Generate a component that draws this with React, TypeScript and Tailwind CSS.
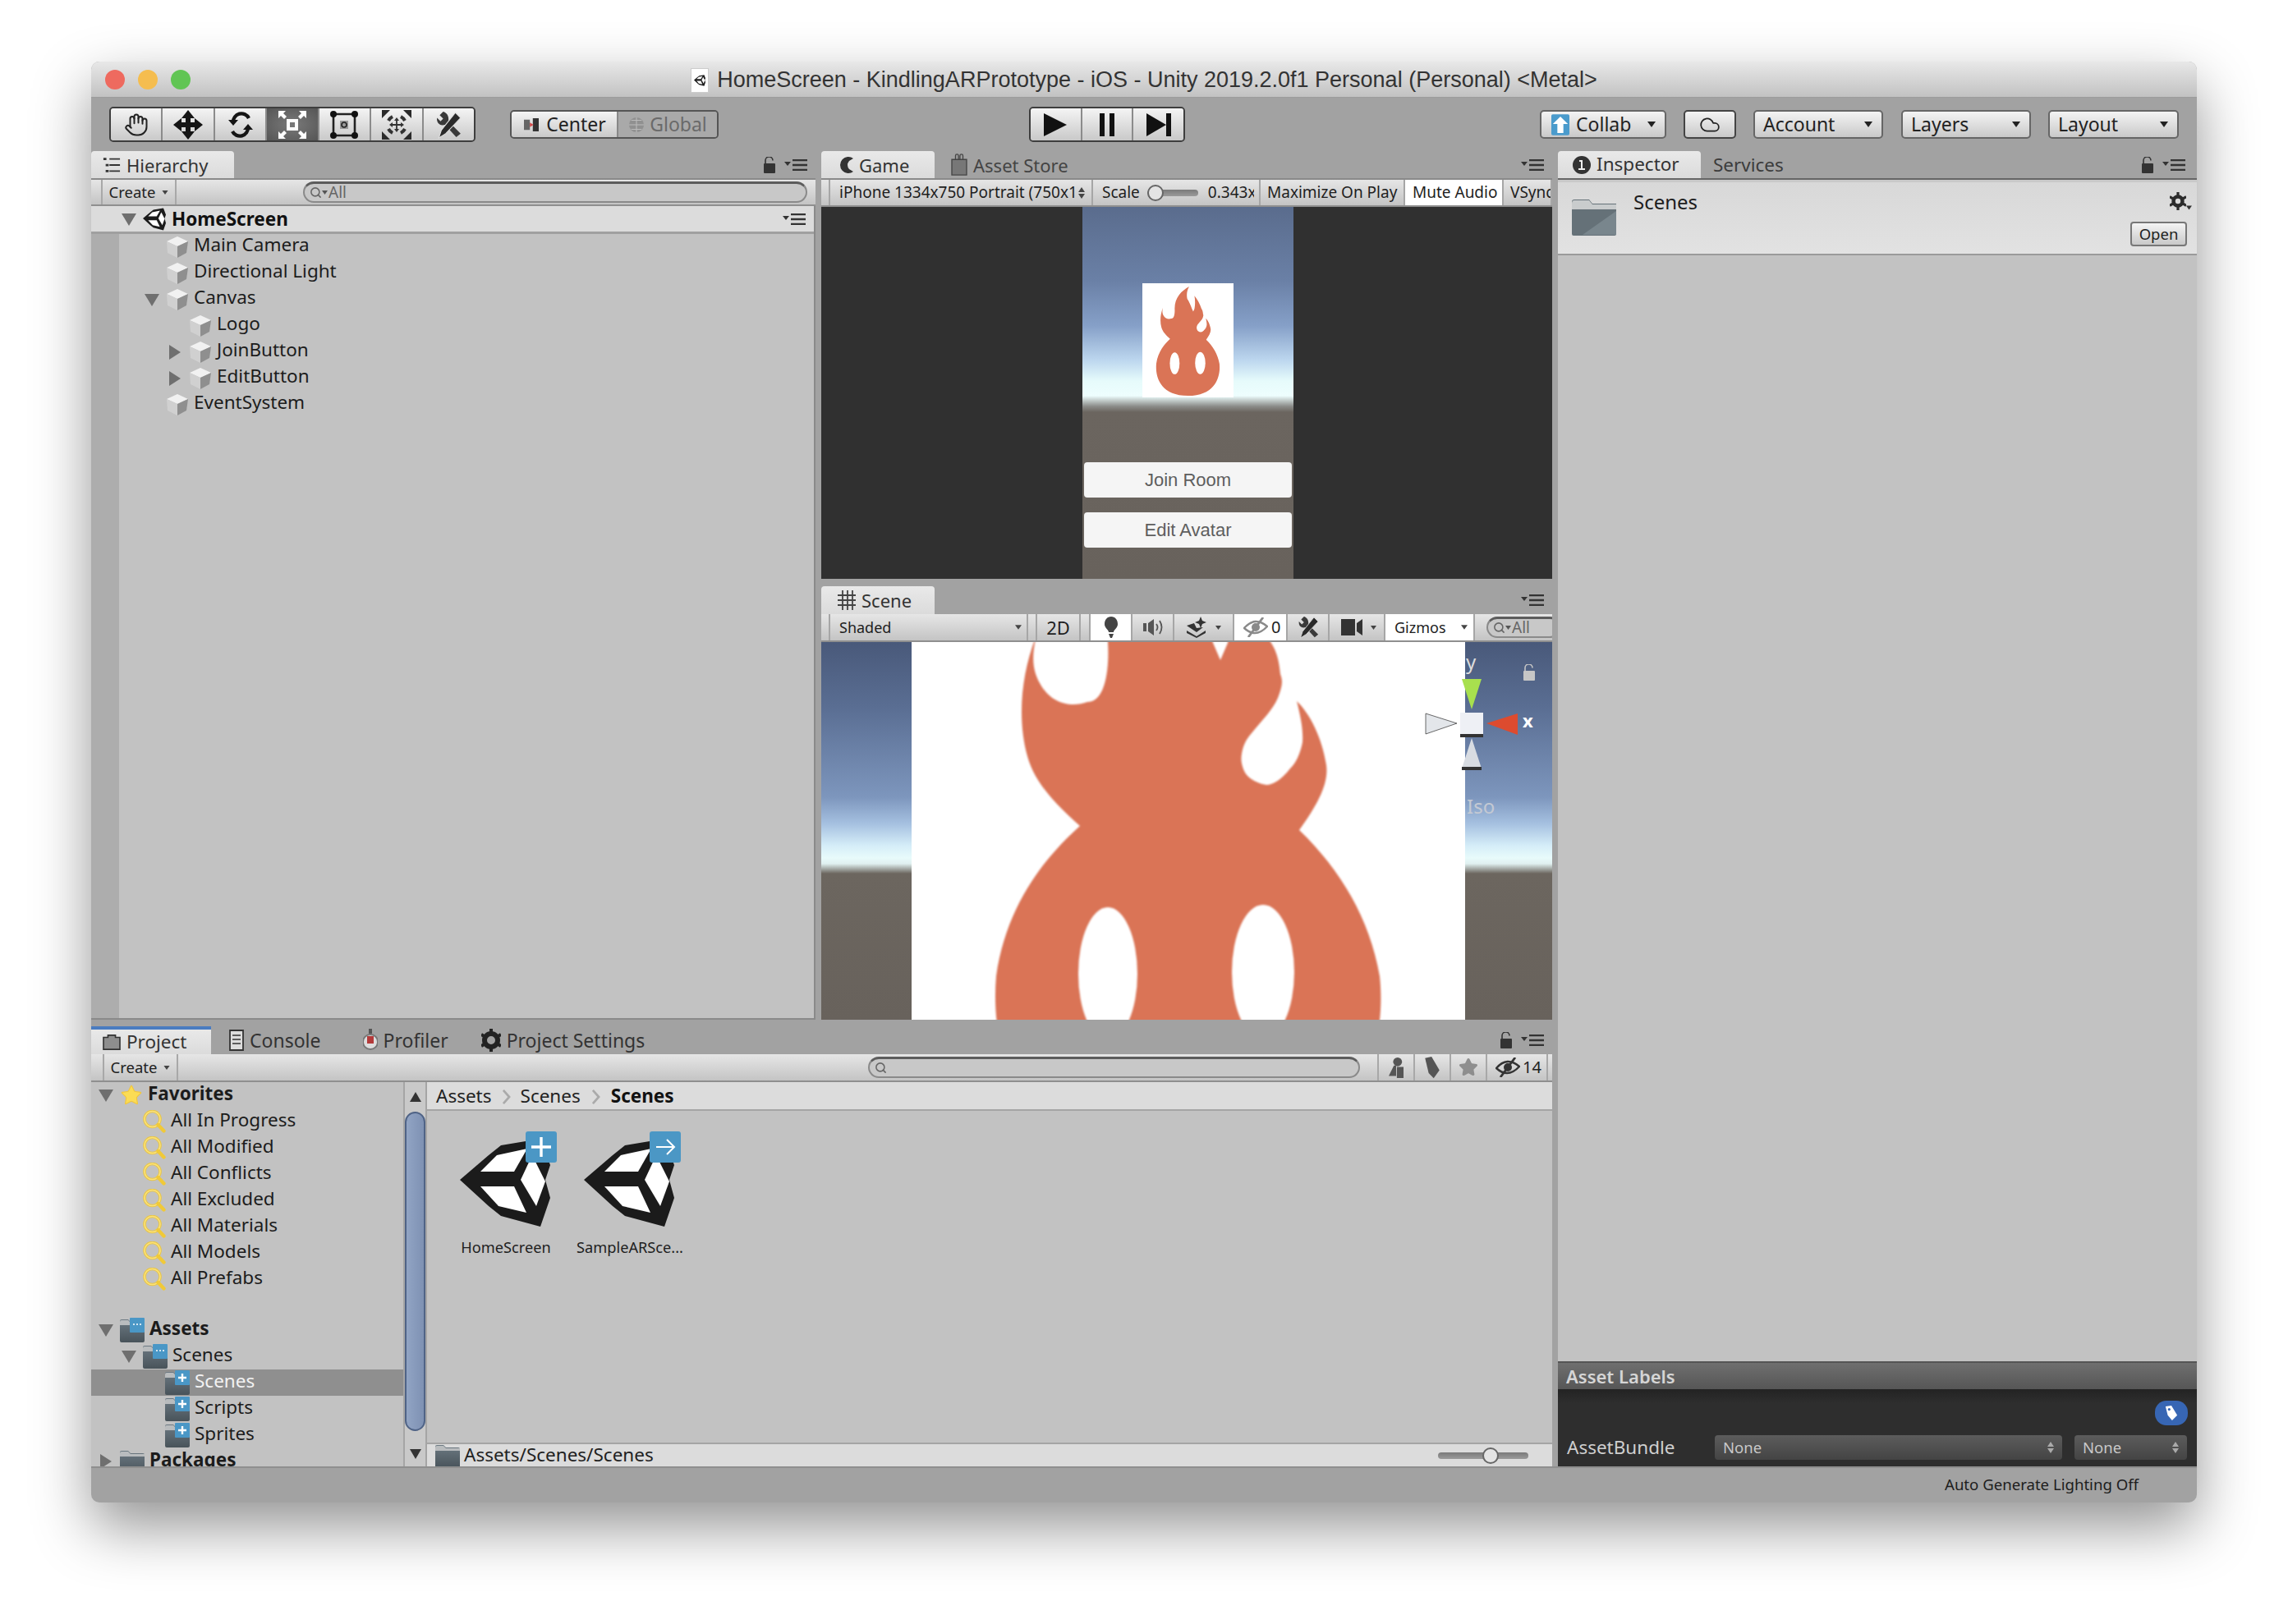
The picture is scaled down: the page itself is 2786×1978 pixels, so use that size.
import { Cloud, Hand, Search, Star } from 'lucide-react';
import { ReactNode } from 'react';

const btnGrad = 'bg-[linear-gradient(#f4f4f4,#c9c9c9)]';
const barGrad = 'bg-[linear-gradient(#e6e6e6,#c4c4c4)]';

const Caret = ({ className = 'w-[10px] h-[7px] text-[#222]' }: { className?: string }) => (
  <svg viewBox="0 0 10 7" className={className}>
    <path d="M0 0H10L5 7Z" fill="currentColor" />
  </svg>
);

const TreeArrow = ({ open }: { open: boolean }) => (
  <svg viewBox="0 0 18 18" className="w-[18px] h-[18px] text-[#6f6f6f]">
    <path d={open ? 'M0 2H18L9 17Z' : 'M2 0L16 9L2 18Z'} fill="currentColor" />
  </svg>
);

const PaneMenu = () => (
  <svg viewBox="0 0 28 14" className="w-[28px] h-[14px]">
    <path d="M0 3H8L4 8Z" fill="#333" />
    <path d="M10 1H28M10 7H28M10 13H28" stroke="#333" strokeWidth="2.4" />
  </svg>
);

const Lock = ({ color = '#333' }: { color?: string }) => (
  <svg viewBox="0 0 16 20" className="w-[16px] h-[20px]">
    <path d="M3 8V4.5a4.5 4.5 0 0 1 9 0" fill="none" stroke={color} strokeWidth="1.6" />
    <rect x="1" y="8" width="14" height="12" rx="1" fill={color} />
  </svg>
);

const Cube = () => (
  <svg viewBox="0 0 28 28" className="w-[28px] h-[28px] shrink-0">
    <path d="M14 1L27 7L14 13L1 7Z" fill="#f1f1f1" />
    <path d="M1 7L14 13V27L2 21Z" fill="#d0d0d0" />
    <path d="M27 7L14 13V27L25 21Z" fill="#8f8f8f" />
  </svg>
);

const UnityMark = ({ className }: { className: string }) => (
  <svg viewBox="0 0 110 107" className={className}>
    <path d="M0 50L35 20L50 8L98 0L110 32L104 50L110 72L98 107L50 94L35 82Z" fill="#1b1b1b" />
    <path d="M25 40L45 20L82 12L66 40Z" fill="#fff" />
    <path d="M74 50L88 20L104 52L93 82Z" fill="#fff" />
    <path d="M25 58H66L81 90L47 82Z" fill="#fff" />
  </svg>
);

const Folder = ({ badge }: { badge?: 'dots' | 'plus' }) => (
  <svg viewBox="0 0 30 30" className="w-[30px] h-[30px] shrink-0">
    <defs>
      <linearGradient id="fold" x1="0" y1="0" x2="0" y2="1">
        <stop offset="0" stopColor="#6d7a83" />
        <stop offset="1" stopColor="#48535a" />
      </linearGradient>
    </defs>
    <path d="M0 4Q0 2 2 2H10L13 5H28Q30 5 30 7V28Q30 30 28 30H2Q0 30 0 28Z" fill="url(#fold)" />
    <path d="M0 5Q0 3 2 3H10L13 6H30V9H0Z" fill="#b9bcbe" />
    {badge && <rect x="12" y="0" width="18" height="18" rx="1" fill="#4a97c6" />}
    {badge === 'dots' && <path d="M16 8h2M20 8h2M24 8h2" stroke="#fff" strokeWidth="1.6" />}
    {badge === 'plus' && <path d="M21 4V14M16 9H26" stroke="#fff" strokeWidth="2.4" />}
  </svg>
);

const Magnifier = () => (
  <svg viewBox="0 0 28 28" className="w-[28px] h-[28px] shrink-0">
    <circle cx="11.5" cy="11" r="9.5" fill="none" stroke="#e8c648" strokeWidth="3.6" />
    <circle cx="11.5" cy="11" r="9.5" fill="none" stroke="#fbe27a" strokeWidth="1.6" />
    <path d="M18.5 18L25.5 25.5" stroke="#f0c938" strokeWidth="4.4" strokeLinecap="round" />
  </svg>
);

const Tools = ({ className = 'w-[30px] h-[32px]' }: { className?: string }) => (
  <svg viewBox="0 0 30 32" className={className}>
    <path d="M9 1L5 5L9 9L6 12L2 8C1 13 5 18 11 16L24 30L29 26L15 12C16 6 13 2 9 1Z" fill="#3a3a3a" />
    <path d="M23 2L29 8L12 26L4 31L7 22Z" fill="#2a2a2a" stroke="#e0e0e0" strokeWidth="1" />
  </svg>
);

const EyeSlash = ({ color = '#8a8a8a' }: { color?: string }) => (
  <svg viewBox="0 0 30 24" className="w-[30px] h-[24px]">
    <path d="M1 13Q14 -2 29 11Q15 26 1 13Z" fill="none" stroke={color} strokeWidth="2.4" />
    <circle cx="15" cy="12" r="5" fill={color} />
    <path d="M6 24L24 0" stroke={color} strokeWidth="2.8" />
  </svg>
);

const Flame = ({ className }: { className: string }) => (
  <svg viewBox="0 0 674 844" preserveAspectRatio="none" className={className}>
    <rect width="674" height="844" fill="#fff" />
    <g className="blur-[1.2px]">
      <path
        d="M346 24C290 55 238 105 239 189C241 220 236 262 214 261C195 268 170 264 156 238C147 222 146 205 152 180C134 225 128 280 141 327C150 360 175 385 205 412C165 448 116 505 103 595C95 690 130 832 338 832C540 832 580 690 570 595C558 525 522 465 472 417C495 385 508 360 505 338C500 305 485 275 469 260C474 280 477 295 476 310C473 325 468 335 461 342C450 356 440 362 432 362C418 360 408 352 405 345C401 335 401 330 402 324C404 312 408 306 414 299C428 282 440 270 446 256C452 240 452 235 449 227C447 205 442 195 437 188C425 150 405 115 385 92C392 125 390 165 385 189L376 210L367 189C356 160 345 135 332 115C325 85 330 50 346 24Z"
        fill="#da7456"
      />
      <ellipse cx="239" cy="592" rx="36" ry="81" fill="#fff" />
      <ellipse cx="428" cy="590" rx="38" ry="82" fill="#fff" />
    </g>
  </svg>
);

const SearchField = ({ className, label }: { className: string; label?: string }) => (
  <div className={`flex items-center rounded-full border-2 border-[#8a8a8a] border-t-[3px] border-t-[#5c5c5c] bg-[#c8c8c8] pl-[6px] h-[26px] ${className}`}>
    <Search className="w-[15px] h-[15px] text-[#666]" strokeWidth={2.5} />
    {label && (
      <>
        <Caret className="w-[7px] h-[5px] text-[#555]" />
        <span className="text-[19px] leading-none text-[#666] ml-[1px]">{label}</span>
      </>
    )}
  </div>
);

const Tab = ({ active, icon, label, className = '', size = 'text-[22px]' }: { active?: boolean; icon: ReactNode; label: string; className?: string; size?: string }) => (
  <div
    className={`flex items-center gap-[7px] h-full text-[#333] ${size} ${
      active ? 'bg-[linear-gradient(#e9e9e9,#dbdbdb)] rounded-t-[4px]' : ''
    } ${className}`}>
    {icon}
    <span className="leading-none">{label}</span>
  </div>
);

const ListIcon = () => (
  <svg viewBox="0 0 24 24" className="w-[22px] h-[24px]">
    <path d="M1 4H5M4 12H8M4 20H8" stroke="#333" strokeWidth="3" />
    <path d="M9 4H23M9 12H23M9 20H23" stroke="#333" strokeWidth="2" />
  </svg>
);

const ToolSeg = ({ active, children }: { active?: boolean; children: ReactNode }) => (
  <div
    className={`flex-1 flex items-center justify-center border-r-2 last:border-r-0 border-[#8b8b8b] ${
      active ? 'bg-[radial-gradient(#7a7a7a,#555)]' : btnGrad
    }`}>
    {children}
  </div>
);

const Dropdown = ({ label, className }: { label: string; className: string }) => (
  <div className={`flex items-center justify-between h-[35px] rounded-[5px] border-2 border-[#666] pl-[10px] pr-[11px] text-[23px] text-[#222] ${btnGrad} ${className}`}>
    <span className="leading-none">{label}</span>
    <Caret />
  </div>
);

const TreeRow = ({ pad, arrow, icon, label, bold, selected, labelClass = '-mt-[5px]' }: { pad: string; arrow?: 'open' | 'closed'; icon: ReactNode; label: string; bold?: boolean; selected?: boolean; labelClass?: string }) => (
  <div className={`flex items-center h-[32px] ${pad} ${selected ? 'bg-[#8f8f8f] text-[#f2f2f2]' : 'text-[#1c1c1c]'}`}>
    <span className="w-[26px] shrink-0 flex">{arrow && <TreeArrow open={arrow === 'open'} />}</span>
    {icon}
    <span className={`ml-[6px] text-[22.5px] leading-none whitespace-nowrap ${bold ? 'font-bold' : ''} ${labelClass}`}>{label}</span>
  </div>
);

const Hierarchy = () => (
  <div className="w-[889px] h-full flex flex-col pr-[7px] pb-[8px]">
    <div className="flex items-center h-[33px] shrink-0 pr-[10px]">
      <Tab active icon={<ListIcon />} label="Hierarchy" className="w-[174px] pl-[14px]" />
      <div className="ml-auto flex items-center gap-[10px]">
        <Lock />
        <PaneMenu />
      </div>
    </div>
    <div className={`flex items-center h-[34px] shrink-0 border-b-2 border-[#8f8f8f] border-t-2 border-t-[#8a8a8a] ${barGrad}`}>
      <div className="ml-[12px] w-[92px] h-full flex items-center justify-center gap-[8px] border-x-2 border-[#a8a8a8] text-[18.5px] text-[#222]">
        <span className="leading-none">Create</span>
        <Caret className="w-[8px] h-[5px] text-[#444]" />
      </div>
      <SearchField className="ml-[154px] w-[614px]" label="All" />
    </div>
    <div className="flex-1 flex flex-col border-r-2 border-b-2 border-[#8a8a8a] bg-[#c2c2c2] overflow-hidden">
      <div className="flex items-center h-[34px] shrink-0 bg-[#dcdcdc] border-b-[3px] border-[#a0a0a0] pl-[37px] pr-[10px]">
        <TreeArrow open />
        <UnityMark className="ml-[8px] w-[28px] h-[28px]" />
        <span className="ml-[7px] pt-[2px] text-[22.5px] font-bold leading-none text-[#111]">HomeScreen</span>
        <div className="ml-auto">
          <PaneMenu />
        </div>
      </div>
      <div className="flex-1 flex">
        <div className="w-[34px] bg-[#adadad] shrink-0" />
        <div className="flex-1">
          <TreeRow pad="pl-[31px]" icon={<Cube />} label="Main Camera" />
          <TreeRow pad="pl-[31px]" icon={<Cube />} label="Directional Light" />
          <TreeRow pad="pl-[31px]" arrow="open" icon={<Cube />} label="Canvas" />
          <TreeRow pad="pl-[59px]" icon={<Cube />} label="Logo" />
          <TreeRow pad="pl-[59px]" arrow="closed" icon={<Cube />} label="JoinButton" />
          <TreeRow pad="pl-[59px]" arrow="closed" icon={<Cube />} label="EditButton" />
          <TreeRow pad="pl-[31px]" icon={<Cube />} label="EventSystem" />
        </div>
      </div>
    </div>
  </div>
);

const Cell = ({ className, children }: { className: string; children: ReactNode }) => (
  <div className={`h-full flex items-center shrink-0 border-r-2 border-[#a6a6a6] text-[#1e1e1e] overflow-hidden whitespace-nowrap ${className}`}>
    {children}
  </div>
);

const MiniSlider = ({ className }: { className: string }) => (
  <div className={`relative flex items-center ${className}`}>
    <div className="h-[8px] w-full rounded-full bg-[linear-gradient(#7a7a7a,#9a9a9a)]" />
  </div>
);

const GamePanel = () => (
  <div className="h-[530px] flex flex-col">
    <div className="flex items-center h-[33px] shrink-0 pr-[10px]">
      <Tab
        active
        icon={
          <svg viewBox="0 0 18 24" className="w-[18px] h-[24px]">
            <path d="M18 4A10 10 0 1 0 18 20L13 17Q9 12 13 7Z" fill="#333" />
          </svg>
        }
        label="Game"
        className="w-[138px] pl-[21px]"
      />
      <Tab
        icon={
          <svg viewBox="0 0 22 30" className="w-[20px] h-[27px]">
            <path d="M1 8H21V29H1Z" fill="#777" stroke="#444" strokeWidth="1.5" />
            <path d="M6 8V3a2 2 0 0 1 4 0V8M12 8V3a2 2 0 0 1 4 0V8" fill="none" stroke="#444" strokeWidth="1.5" />
          </svg>
        }
        label="Asset Store"
        className="ml-[20px] text-[#444]"
      />
      <div className="ml-auto">
        <PaneMenu />
      </div>
    </div>
    <div className={`flex h-[35px] shrink-0 text-[19px] border-t-2 border-t-[#8a8a8a] border-b-[2px] border-b-[#8f8f8f] ${barGrad}`}>
      <Cell className="w-[11px]">{null}</Cell>
      <Cell className="w-[320px] pl-[11px] justify-between pr-[8px]">
        <span className="leading-none">iPhone 1334x750 Portrait (750x1</span>
        <svg viewBox="0 0 8 16" className="w-[8px] h-[16px] shrink-0">
          <path d="M0 7L4 1L8 7ZM0 9H8L4 15Z" fill="#444" />
        </svg>
      </Cell>
      <Cell className="w-[204px] pl-[11px]">
        <span className="leading-none">Scale</span>
        <div className="relative ml-[9px] w-[62px] h-[20px] flex items-center">
          <MiniSlider className="w-full" />
          <div className="absolute left-0 w-[20px] h-[20px] rounded-full border-2 border-[#666] bg-[#e4e4e4]" />
        </div>
        <span className="ml-[12px] w-[56px] overflow-hidden leading-none">0.343x</span>
      </Cell>
      <Cell className="w-[176px] pl-[8px]">
        <span className="leading-none">Maximize On Play</span>
      </Cell>
      <Cell className="w-[120px] pl-[9px] bg-white">
        <span className="leading-none">Mute Audio</span>
      </Cell>
      <Cell className="flex-1 shrink pl-[8px] border-r-0">
        <span className="leading-none">VSync</span>
      </Cell>
    </div>
    <div className="h-[453px] flex bg-[#303030] shrink-0 ">
      <div className="w-[318px] shrink-0" />
      <div className="w-[257px] shrink-0 flex flex-col items-center pt-[93px] bg-[linear-gradient(#5a6c8d_0,#6a80a6_90px,#86a0c8_145px,#bdd7ef_187px,#e6fbfb_212px,#eefefe_230px,#8a8b88_243px,#6b655f_250px,#68625c_100%)]">
        <Flame className="w-[111px] h-[139px] shrink-0" />
        <div className="mt-[79px] w-[253px] h-[43px] shrink-0 flex items-center justify-center rounded-[4px] bg-[#f5f5f5] text-[#5e5e5e] text-[22px] [font-family:'Liberation_Sans',sans-serif]">
          Join Room
        </div>
        <div className="mt-[18px] w-[253px] h-[43px] shrink-0 flex items-center justify-center rounded-[4px] bg-[#f5f5f5] text-[#5e5e5e] text-[22px] [font-family:'Liberation_Sans',sans-serif]">
          Edit Avatar
        </div>
      </div>
    </div>
  </div>
);

const Gizmo = () => (
  <div className="absolute left-[730px] top-[20px] w-[150px] h-[160px] text-white">
    <span className="absolute left-[55px] top-[-8px] text-[24px] leading-none text-[#ddd]">y</span>
    <svg viewBox="0 0 125 125" className="absolute left-0 top-[18px] w-[125px] h-[125px]">
      <path d="M50 7L74 7L62 44Z" fill="#a8e04e" />
      <path d="M6 49L44 61L6 74Z" fill="#e3e6ea" stroke="#444" strokeWidth="0.8" />
      <path d="M80 61L118 49V75Z" fill="#dd4b2f" />
      <path d="M62 79L74 116H50Z" fill="#d8dce2" />
      <rect x="50" y="114" width="24" height="4" fill="#333" />
      <rect x="48" y="48" width="28" height="26" fill="#eef0f5" />
      <rect x="48" y="74" width="28" height="4" fill="#333" />
    </svg>
    <span className="absolute left-[124px] top-[64px] text-[22px] leading-none font-bold">x</span>
    <span className="absolute left-[56px] top-[168px] text-[24px] leading-none text-[#c4c9d3]">Iso</span>
    <div className="absolute left-[124px] top-[7px]">
      <Lock color="#c6c6c6" />
    </div>
  </div>
);

const ScenePanel = () => (
  <div className="h-[536px] flex flex-col">
    <div className="flex items-center h-[34px] shrink-0 pr-[10px]">
      <Tab
        active
        icon={
          <svg viewBox="0 0 22 24" className="w-[22px] h-[24px]">
            <path d="M6 0V24M12 0V24M18 0V24M0 6H22M0 12H22M0 18H22" stroke="#444" strokeWidth="1.8" />
          </svg>
        }
        label="Scene"
        className="w-[138px] pl-[20px]"
      />
      <div className="ml-auto">
        <PaneMenu />
      </div>
    </div>
    <div className={`flex h-[34px] shrink-0 text-[18px] border-b-2 border-[#8f8f8f] ${barGrad}`}>
      <Cell className="w-[11px]">{null}</Cell>
      <Cell className="w-[241px] pl-[11px] justify-between pr-[6px]">
        <span className="leading-none">Shaded</span>
        <Caret className="w-[8px] h-[6px] text-[#444]" />
      </Cell>
      <Cell className="w-[11px]">{null}</Cell>
      <Cell className="w-[53px] justify-center">
        <span className="leading-none text-[22px]">2D</span>
      </Cell>
      <Cell className="w-[12px]">{null}</Cell>
      <Cell className="w-[51px] justify-center bg-white">
        <svg viewBox="0 0 18 26" className="w-[18px] h-[26px]">
          <path d="M9 0C14 0 17 4 17 9C17 14 12 16 12 19H6C6 16 1 14 1 9C1 4 4 0 9 0ZM6 21H12L10 26H8Z" fill="#444" />
        </svg>
      </Cell>
      <Cell className="w-[51px] justify-center">
        <svg viewBox="0 0 26 22" className="w-[26px] h-[22px]">
          <path d="M1 6H5V16H1ZM7 6L14 1V21L7 16Z" fill="#555" />
          <path d="M17 7Q20 11 17 15M21 3Q26 11 21 19" fill="none" stroke="#555" strokeWidth="1.8" />
        </svg>
      </Cell>
      <Cell className="w-[73px] pl-[14px] gap-[10px]">
        <svg viewBox="0 0 26 26" className="w-[26px] h-[26px]">
          <path d="M18 0L20 5L25 7L20 9L18 14L16 9L11 7L16 5ZM1 11L10 8L13 14L21 13L13 19ZM1 17L13 24L24 17V20L13 26L1 20Z" fill="#333" />
        </svg>
        <Caret className="w-[7px] h-[5px] text-[#444]" />
      </Cell>
      <Cell className="w-[65px] pl-[11px] gap-[4px] bg-white">
        <EyeSlash />
        <span className="leading-none text-[20px]">0</span>
      </Cell>
      <Cell className="w-[51px] justify-center">
        <Tools className="w-[26px] h-[28px]" />
      </Cell>
      <Cell className="w-[68px] pl-[14px] gap-[10px]">
        <svg viewBox="0 0 26 22" className="w-[26px] h-[22px]">
          <path d="M0 1H17V21H0ZM19 6L26 1V21L19 16Z" fill="#333" />
        </svg>
        <Caret className="w-[7px] h-[5px] text-[#444]" />
      </Cell>
      <Cell className="w-[109px] pl-[11px] justify-between pr-[7px] bg-white">
        <span className="leading-none">Gizmos</span>
        <Caret className="w-[8px] h-[6px] text-[#444]" />
      </Cell>
      <div className="flex-1 flex items-center pl-[14px] overflow-hidden">
        <SearchField className="w-[90px] shrink-0" label="All" />
      </div>
    </div>
    <div className="relative h-[460px] shrink-0 overflow-hidden bg-[linear-gradient(#49597a_0,#5a6e93_80px,#7d96bd_189px,#a5c0e0_221px,#d5edf8_248px,#e8fbfb_263px,#e0f0f0_270px,#6c665f_282px,#68625c_100%)]">
      <div className="absolute left-[110px] top-[-188px] w-[674px] h-[844px]">
        <Flame className="w-full h-full" />
      </div>
      <Gizmo />
    </div>
  </div>
);

const projectLabel = '-mt-[3px]';

const FavRow = ({ label }: { label: string }) => (
  <TreeRow pad="pl-[37px]" icon={<Magnifier />} label={label} labelClass={projectLabel} />
);

const SceneAsset = ({ label, arrow }: { label: string; arrow?: boolean }) => (
  <div className="flex flex-col items-center w-[144px] shrink-0">
    <div className="relative w-[110px] h-[107px] -ml-[2px]">
      <UnityMark className="w-[110px] h-[107px] blur-[0.7px]" />
      <div className="absolute right-[-8px] top-[-9px] w-[38px] h-[38px] rounded-[3px] bg-[#4b97c5] flex items-center justify-center">
        <svg viewBox="0 0 26 26" className="w-[26px] h-[26px]">
          {arrow ? (
            <path d="M2 13H24M15 4L24 13L15 22" fill="none" stroke="#fff" strokeWidth="2" />
          ) : (
            <path d="M13 1V25M1 13H25" stroke="#fff" strokeWidth="3.4" />
          )}
        </svg>
      </div>
    </div>
    <span className="mt-[16px] text-[18.2px] leading-none text-[#1e1e1e] whitespace-nowrap">{label}</span>
  </div>
);

const ProjectPanel = () => (
  <div className="flex-1 flex flex-col min-h-0 pr-[7px]">
    <div className="flex items-center h-[34px] shrink-0 text-[#444]">
      <div className="w-[146px] h-full border-t-4 border-[#4a7cc0] bg-[linear-gradient(#e9e9e9,#dbdbdb)] flex items-center pl-[14px] gap-[7px] text-[22.5px] text-[#333]">
        <svg viewBox="0 0 24 22" className="w-[22px] h-[20px]">
          <path d="M1 5H7V2H17V5H23V21H1Z" fill="#8e8e8e" stroke="#333" strokeWidth="1.8" />
        </svg>
        <span className="leading-none">Project</span>
      </div>
      <Tab
        icon={
          <svg viewBox="0 0 18 26" className="w-[18px] h-[26px]">
            <path d="M1 1H17V25H1Z" fill="#ddd" stroke="#333" strokeWidth="1.8" />
            <path d="M4 7H14M4 12H14M4 17H14" stroke="#333" strokeWidth="1.5" />
          </svg>
        }
        label="Console"
        size="text-[23px]"
        className="ml-[22px]"
      />
      <Tab
        icon={
          <svg viewBox="0 0 18 28" className="w-[18px] h-[28px]">
            <rect x="7" y="0" width="4" height="6" fill="#555" />
            <circle cx="9" cy="16" r="9" fill="#ddd" stroke="#777" strokeWidth="2" />
            <path d="M5 9H13V18H5Z" fill="#b33a3a" />
          </svg>
        }
        label="Profiler"
        size="text-[23px]"
        className="ml-[51px]"
      />
      <Tab
        icon={
          <svg viewBox="0 0 24 28" className="w-[24px] h-[28px]">
            <circle cx="12" cy="14" r="8" fill="none" stroke="#222" strokeWidth="6" />
            <path d="M12 0V5M12 23V28M0 7L5 10M24 7L19 10M0 21L5 18M24 21L19 18" stroke="#222" strokeWidth="4" />
          </svg>
        }
        label="Project Settings"
        size="text-[23px]"
        className="ml-[40px] gap-[6px]"
      />
      <div className="ml-auto pr-[10px] flex items-center gap-[10px]">
        <Lock />
        <PaneMenu />
      </div>
    </div>
    <div className={`flex items-center h-[34px] shrink-0 border-b-2 border-[#8f8f8f] ${barGrad}`}>
      <div className="ml-[14px] w-[92px] h-full flex items-center justify-center gap-[8px] border-x-2 border-[#a8a8a8] text-[18.5px] text-[#222]">
        <span className="leading-none">Create</span>
        <Caret className="w-[8px] h-[5px] text-[#444]" />
      </div>
      <SearchField className="ml-[840px] w-[599px]" />
      <div className="ml-[21px] h-full flex items-center border-l-2 border-[#a8a8a8]">
        <div className="w-[44px] h-full flex items-center justify-center border-r-2 border-[#a8a8a8]">
          <svg viewBox="0 0 22 30" className="w-[20px] h-[27px]">
            <circle cx="13" cy="7" r="6" fill="#555" />
            <path d="M8 12L1 26H11V12ZM12 14H21V29H12Z" fill="#555" />
          </svg>
        </div>
        <div className="w-[44px] h-full flex items-center justify-center border-r-2 border-[#a8a8a8]">
          <svg viewBox="0 0 22 32" className="w-[20px] h-[28px]">
            <path d="M1 3L10 1L21 20L13 31L6 24Z" fill="#555" />
          </svg>
        </div>
        <div className="w-[44px] h-full flex items-center justify-center border-r-2 border-[#a8a8a8]">
          <Star className="w-[24px] h-[24px] text-[#8e8e8e]" fill="currentColor" />
        </div>
        <div className="w-[74px] h-full flex items-center pl-[10px] gap-[3px] border-r-2 border-[#a8a8a8]">
          <EyeSlash color="#333" />
          <span className="text-[20px] leading-none text-[#222]">14</span>
        </div>
      </div>
    </div>
    <div className="flex-1 flex min-h-0 overflow-hidden">
      <div className="w-[380px] shrink-0 bg-[#c2c2c2] overflow-hidden">
        <TreeRow pad="pl-[9px]" arrow="open" icon={<Star className="w-[28px] h-[28px] text-[#f0c63e]" fill="#fbdc55" strokeWidth={1} />} label="Favorites" bold labelClass="-ml-[1px] -mt-[3px]" />
        <FavRow label="All In Progress" />
        <FavRow label="All Modified" />
        <FavRow label="All Conflicts" />
        <FavRow label="All Excluded" />
        <FavRow label="All Materials" />
        <FavRow label="All Models" />
        <FavRow label="All Prefabs" />
        <div className="h-[30px]" />
        <TreeRow pad="pl-[9px]" arrow="open" icon={<Folder badge="dots" />} label="Assets" bold labelClass={projectLabel} />
        <TreeRow pad="pl-[37px]" arrow="open" icon={<Folder badge="dots" />} label="Scenes" labelClass={projectLabel} />
        <TreeRow pad="pl-[64px]" icon={<Folder badge="plus" />} label="Scenes" selected labelClass={projectLabel} />
        <TreeRow pad="pl-[64px]" icon={<Folder badge="plus" />} label="Scripts" labelClass={projectLabel} />
        <TreeRow pad="pl-[64px]" icon={<Folder badge="plus" />} label="Sprites" labelClass={projectLabel} />
        <TreeRow pad="pl-[9px]" arrow="closed" icon={<Folder />} label="Packages" bold labelClass={projectLabel} />
      </div>
      <div className="w-[29px] shrink-0 flex flex-col items-center bg-[#c9c9c9] border-x-2 border-[#a5a5a5]">
        <div className="h-[36px] flex items-center shrink-0">
          <svg viewBox="0 0 14 12" className="w-[14px] h-[12px]">
            <path d="M0 12L7 0L14 12Z" fill="#333" />
          </svg>
        </div>
        <div className="w-[25px] h-[389px] shrink-0 rounded-full border-2 border-[#4f6386] bg-[linear-gradient(90deg,#91a4c4,#7e91b3)]" />
        <div className="mt-auto h-[30px] flex items-center">
          <svg viewBox="0 0 14 12" className="w-[14px] h-[12px]">
            <path d="M0 0L14 0L7 12Z" fill="#333" />
          </svg>
        </div>
      </div>
      <div className="flex-1 flex flex-col min-w-0 bg-[#c2c2c2]">
        <div className="flex items-center h-[35px] shrink-0 bg-[#dcdcdc] border-b-2 border-[#a5a5a5] pl-[11px] pt-[2px] text-[22.5px] text-[#222]">
          <span className="leading-none">Assets</span>
          <svg viewBox="0 0 12 20" className="w-[11px] h-[18px] mx-[12px]">
            <path d="M2 1L10 10L2 19" fill="none" stroke="#aaa" strokeWidth="3" />
          </svg>
          <span className="leading-none">Scenes</span>
          <svg viewBox="0 0 12 20" className="w-[11px] h-[18px] mx-[13px]">
            <path d="M2 1L10 10L2 19" fill="none" stroke="#aaa" strokeWidth="3" />
          </svg>
          <span className="leading-none font-bold text-[#111]">Scenes</span>
        </div>
        <div className="flex-1 flex pt-[34px] pl-[24px] gap-[7px]">
          <SceneAsset label="HomeScreen" />
          <SceneAsset label="SampleARSce..." arrow />
        </div>
        <div className="flex items-center h-[29px] shrink-0 bg-[#dcdcdc] border-t-2 border-[#a5a5a5] pl-[10px] overflow-hidden">
          <Folder />
          <span className="ml-[5px] text-[22.5px] leading-none text-[#222]">Assets/Scenes/Scenes</span>
          <div className="relative ml-auto mr-[29px] w-[110px] h-[22px] flex items-center">
            <MiniSlider className="w-full" />
            <div className="absolute left-[54px] w-[20px] h-[20px] rounded-full border-2 border-[#666] bg-[#e4e4e4]" />
          </div>
        </div>
      </div>
    </div>
  </div>
);

const Inspector = () => (
  <div className="w-[778px] h-full flex flex-col">
    <div className="flex items-center h-[33px] shrink-0 pr-[14px]">
      <Tab
        active
        icon={
          <svg viewBox="0 0 22 22" className="w-[22px] h-[22px]">
            <circle cx="11" cy="11" r="11" fill="#333" />
            <path d="M8 5H12V15H15V17H7V15H10V7H8Z" fill="#eee" />
          </svg>
        }
        label="Inspector"
        size="text-[22.5px]"
        className="w-[174px] pl-[18px]"
      />
      <span className="ml-[15px] pt-[2px] text-[22.5px] leading-none text-[#3c3c3c]">Services</span>
      <div className="ml-auto flex items-center gap-[10px]">
        <Lock />
        <PaneMenu />
      </div>
    </div>
    <div className="h-[5px] shrink-0 border-t-2 border-[#666] bg-[#c9c9c9]" />
    <div className="relative h-[89px] shrink-0 bg-[linear-gradient(#d8d8d8,#e2e2e2)] border-b-2 border-[#9a9a9a] flex pl-[16px] pt-[20px]">
      <svg viewBox="0 0 56 46" className="w-[56px] h-[46px]">
        <path d="M1 4Q1 1 4 1H22L26 6H55V43Q55 45 53 45H3Q1 45 1 43Z" fill="#657178" />
        <path d="M1 6Q1 2 4 2H22L26 7H55V13H1Z" fill="#c9cccd" />
        <path d="M55 15V44H14Z" fill="#79868d" />
      </svg>
      <span className="ml-[20px] -mt-[11px] text-[24px] h-[30px] leading-[30px] text-[#1d1d1d]">Scenes</span>
      <div className="absolute right-[6px] top-[12px] flex items-end">
        <svg viewBox="0 0 22 24" className="w-[20px] h-[22px]">
          <circle cx="11" cy="12" r="6" fill="none" stroke="#2c2c2c" strokeWidth="5" />
          <path d="M11 0V5M11 19V24M0 6L5 9M22 6L17 9M0 18L5 15M22 18L17 15" stroke="#2c2c2c" strokeWidth="3.5" />
        </svg>
        <Caret className="w-[7px] h-[6px] text-[#333]" />
      </div>
      <div className={`absolute right-[12px] top-[48px] w-[69px] h-[30px] flex items-center justify-center rounded-[4px] border-2 border-[#777] text-[18.5px] text-[#222] ${btnGrad}`}>
        Open
      </div>
    </div>
    <div className="flex-1 bg-[#c2c2c2]" />
    <div className="h-[34px] shrink-0 flex items-center pl-[10px] border-t-2 border-[#555] bg-[linear-gradient(#6f6f6f,#565656)] text-[22px] font-semibold text-[#d5d5d5]">
      <span className="leading-none">Asset Labels</span>
    </div>
    <div className="h-[94px] shrink-0 flex flex-col bg-[#2e2e2e]">
      <div className="h-[56px] flex items-center justify-end pr-[11px] pt-[2px] bg-[linear-gradient(#232323,#2e2e2e_30%)]">
        <div className="w-[40px] h-[30px] rounded-[14px] bg-[#3766b4] flex items-center justify-center">
          <svg viewBox="0 0 18 22" className="w-[16px] h-[20px]">
            <path d="M1 2L9 1L17 14L10 21L4 14Z" fill="#fff" />
            <circle cx="6" cy="6" r="1.8" fill="#3766b4" />
          </svg>
        </div>
      </div>
      <div className="flex items-center pl-[11px]">
        <span className="w-[180px] text-[22.5px] leading-none text-[#cfcfcf]">AssetBundle</span>
        <div className="w-[423px] h-[30px] rounded-[4px] flex items-center justify-between pl-[10px] pr-[10px] bg-[linear-gradient(#5c5c5c,#444)] text-[18.5px] text-[#c8c8c8]">
          <span className="leading-none">None</span>
          <svg viewBox="0 0 8 16" className="w-[8px] h-[16px]">
            <path d="M0 7L4 1L8 7ZM0 9H8L4 15Z" fill="#aaa" />
          </svg>
        </div>
        <div className="ml-[15px] w-[137px] h-[30px] rounded-[4px] flex items-center justify-between pl-[10px] pr-[10px] bg-[linear-gradient(#5c5c5c,#444)] text-[18.5px] text-[#c8c8c8]">
          <span className="leading-none">None</span>
          <svg viewBox="0 0 8 16" className="w-[8px] h-[16px]">
            <path d="M0 7L4 1L8 7ZM0 9H8L4 15Z" fill="#aaa" />
          </svg>
        </div>
      </div>
    </div>
  </div>
);

const App = () => (
  <div className="w-[2786px] h-[1978px] bg-white pt-[75px] pl-[111px] overflow-hidden [font-family:'Noto_Sans',sans-serif]">
    <div className="w-[2564px] h-[1755px] flex flex-col overflow-hidden rounded-t-[10px] rounded-b-[10px] shadow-[0_30px_70px_rgba(0,0,0,0.42)] bg-[#a2a2a2]">
      <div className="relative h-[44px] shrink-0 flex items-center justify-center pt-[2px] bg-[linear-gradient(#e8e8e8,#c2c2c2)] border-b border-[#9c9c9c]">
        <div className="absolute left-[17px] top-[10px] flex gap-[16px]">
          <div className="w-[24px] h-[24px] rounded-full bg-[#ee6a5f]" />
          <div className="w-[24px] h-[24px] rounded-full bg-[#f5bd4f]" />
          <div className="w-[24px] h-[24px] rounded-full bg-[#61c554]" />
        </div>
        <div className="flex items-center gap-[10px]">
          <div className="w-[22px] h-[30px] bg-white flex items-center justify-center border border-[#ccc]">
            <UnityMark className="w-[14px] h-[14px]" />
          </div>
          <span className="text-[27px] leading-none text-[#333] whitespace-nowrap [font-family:'Liberation_Sans',sans-serif]">
            HomeScreen - KindlingARPrototype - iOS - Unity 2019.2.0f1 Personal (Personal) &lt;Metal&gt;
          </span>
        </div>
      </div>
      <div className="h-[65px] shrink-0 flex items-center pl-[22px] bg-[#a2a2a2]">
        <div className="flex w-[446px] h-[43px] shrink-0 overflow-hidden rounded-[5px] border-2 border-[#3e3e3e]">
          <ToolSeg>
            <Hand className="w-[30px] h-[34px] text-[#222]" strokeWidth={1.6} />
          </ToolSeg>
          <ToolSeg>
            <svg viewBox="0 0 36 36" className="w-[36px] h-[36px]">
              <path d="M18 8V28M8 18H28" stroke="#151515" strokeWidth="6" />
              <path d="M18 0L26 10H10ZM18 36L10 26H26ZM0 18L10 10V26ZM36 18L26 26V10Z" fill="#151515" />
            </svg>
          </ToolSeg>
          <ToolSeg>
            <svg viewBox="0 0 32 32" className="w-[32px] h-[32px]">
              <path d="M7 13A10 10 0 0 1 26 8" fill="none" stroke="#151515" strokeWidth="4.2" />
              <path d="M25 19A10 10 0 0 1 6 24" fill="none" stroke="#151515" strokeWidth="4.2" />
              <path d="M1 10H13L7 17ZM31 22H19L25 15Z" fill="#151515" />
            </svg>
          </ToolSeg>
          <ToolSeg active>
            <svg viewBox="0 0 36 36" className="w-[36px] h-[36px]">
              <path d="M11 11H25V25H11ZM15 15V21H21V15Z" fill="#fff" fillRule="evenodd" />
              <path d="M1 1H10L7 4L11 8L8 11L4 7L1 10ZM35 1V10L32 7L28 11L25 8L29 4L26 1ZM1 35V26L4 29L8 25L11 28L7 32L10 35ZM35 35H26L29 32L25 28L28 25L32 29L35 26Z" fill="#fff" />
            </svg>
          </ToolSeg>
          <ToolSeg>
            <svg viewBox="0 0 36 36" className="w-[36px] h-[36px]">
              <path d="M5 5H31V31H5Z" fill="none" stroke="#222" strokeWidth="2.6" />
              <circle cx="5" cy="5" r="4" fill="#111" />
              <circle cx="31" cy="5" r="4" fill="#111" />
              <circle cx="5" cy="31" r="4" fill="#111" />
              <circle cx="31" cy="31" r="4" fill="#111" />
              <rect x="13" y="13" width="10" height="10" fill="#999" />
              <circle cx="18" cy="18" r="3" fill="none" stroke="#222" strokeWidth="1.6" />
            </svg>
          </ToolSeg>
          <ToolSeg>
            <svg viewBox="0 0 38 38" className="w-[38px] h-[38px]">
              <path d="M1 1H11L1 11ZM37 1V11L27 1ZM1 37V27L11 37ZM37 37H27L37 27Z" fill="#2a2a2a" />
              <path d="M9 14A12 12 0 0 1 14 9M24 9A12 12 0 0 1 29 14M29 24A12 12 0 0 1 24 29M14 29A12 12 0 0 1 9 24" fill="none" stroke="#333" strokeWidth="4" />
              <path d="M19 13V25M13 19H25" stroke="#333" strokeWidth="1.8" />
              <path d="M19 10L22 14H16ZM19 28L16 24H22ZM10 19L14 16V22ZM28 19L24 22V16Z" fill="#333" />
            </svg>
          </ToolSeg>
          <ToolSeg>
            <Tools className="w-[32px] h-[34px]" />
          </ToolSeg>
        </div>
        <div className="ml-[42px] flex w-[254px] h-[35px] shrink-0 overflow-hidden rounded-[5px] border-2 border-[#555] text-[23px]">
          <div className={`w-[128px] flex items-center justify-center gap-[7px] text-[#222] ${btnGrad}`}>
            <svg viewBox="0 0 22 20" className="w-[22px] h-[18px]">
              <path d="M1 3H9V17H1Z" fill="#666" />
              <path d="M13 1H21V19H13Z" fill="#333" />
              <path d="M9 7L14 10L9 13Z" fill="#d24a4a" />
            </svg>
            <span className="leading-none">Center</span>
          </div>
          <div className="flex-1 flex items-center justify-center gap-[6px] bg-[#a9a9a9] text-[#6a6a6a] border-l-2 border-[#888]">
            <svg viewBox="0 0 22 24" className="w-[20px] h-[22px]">
              <circle cx="11" cy="12" r="10" fill="#909090" />
              <path d="M1 12H21M11 2V22M4 6H18M4 18H18" stroke="#bbb" strokeWidth="1.2" />
            </svg>
            <span className="leading-none">Global</span>
          </div>
        </div>
        <div className="ml-[378px] flex w-[190px] h-[43px] shrink-0 overflow-hidden rounded-[5px] border-2 border-[#3e3e3e]">
          <ToolSeg>
            <svg viewBox="0 0 30 28" className="w-[30px] h-[28px]">
              <path d="M1 0L29 14L1 28Z" fill="#111" />
            </svg>
          </ToolSeg>
          <ToolSeg>
            <svg viewBox="0 0 20 28" className="w-[20px] h-[28px]">
              <path d="M1 0H7V28H1ZM13 0H19V28H13Z" fill="#111" />
            </svg>
          </ToolSeg>
          <ToolSeg>
            <svg viewBox="0 0 32 28" className="w-[32px] h-[28px]">
              <path d="M1 0L25 14L1 28ZM25 0H31V28H25Z" fill="#111" />
            </svg>
          </ToolSeg>
        </div>
        <div className={`ml-[432px] flex items-center justify-between w-[154px] h-[35px] shrink-0 rounded-[5px] border-2 border-[#666] pl-[13px] pr-[11px] text-[23px] text-[#222] ${btnGrad}`}>
          <span className="flex items-center gap-[8px]">
            <svg viewBox="0 0 24 28" className="w-[22px] h-[26px] -ml-[1px]">
              <rect width="24" height="28" rx="2" fill="#4a9bcc" />
              <path d="M12 3L22 13H16V25H8V13H2Z" fill="#fff" />
            </svg>
            <span className="leading-none">Collab</span>
          </span>
          <Caret />
        </div>
        <div className={`ml-[21px] flex items-center justify-center w-[64px] h-[35px] shrink-0 rounded-[5px] border-2 border-[#444] ${btnGrad}`}>
          <Cloud className="w-[30px] h-[26px] text-[#222]" strokeWidth={1.6} />
        </div>
        <Dropdown label="Account" className="ml-[21px] w-[158px] shrink-0" />
        <Dropdown label="Layers" className="ml-[22px] w-[158px] shrink-0" />
        <Dropdown label="Layout" className="ml-[21px] w-[159px] shrink-0" />
      </div>
      <div className="h-[1602px] shrink-0 flex">
        <div className="w-[1786px] flex flex-col shrink-0">
          <div className="h-[1066px] shrink-0 flex">
            <Hierarchy />
            <div className="w-[897px] pr-[7px] flex flex-col">
              <GamePanel />
              <ScenePanel />
            </div>
          </div>
          <ProjectPanel />
        </div>
        <Inspector />
      </div>
      <div className="flex-1 flex items-center justify-end pr-[71px] pb-[2px] border-t-2 border-[#8f8f8f] text-[18.6px] text-[#1d1d1d]">
        <span className="leading-none">Auto Generate Lighting Off</span>
      </div>
    </div>
  </div>
);

export default App;
